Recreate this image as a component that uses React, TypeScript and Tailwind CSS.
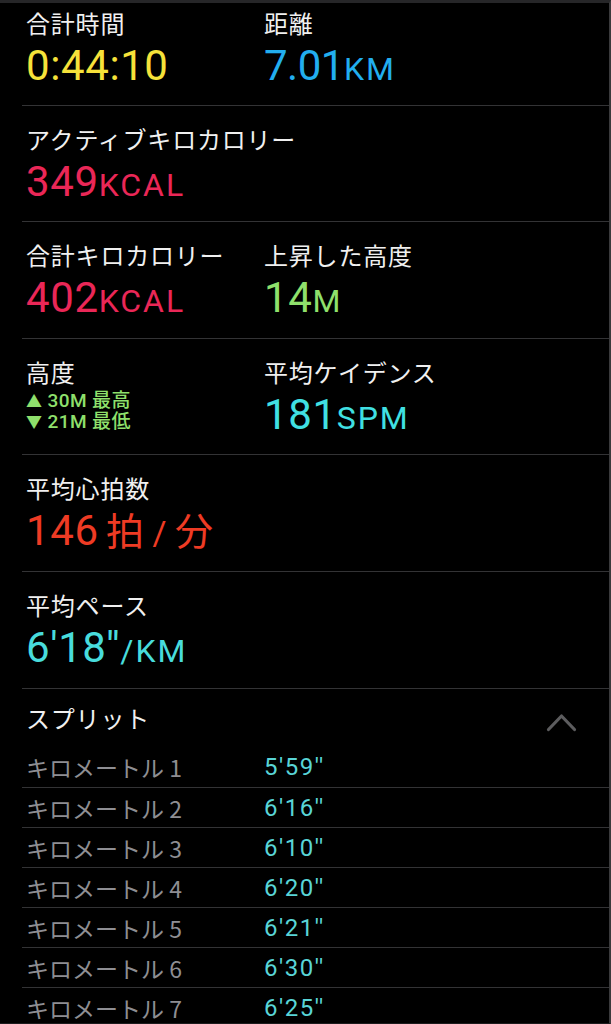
import React from "react";

const JP = "font-['Noto_Sans_CJK_JP',sans-serif]";
const NUM = "font-['Roboto','Noto_Sans_CJK_JP',sans-serif]";

function Label({ children }: { children: React.ReactNode }) {
  return (
    <div className={`${JP} text-[24px] leading-[30px] tracking-[0.8px] text-[#f0f0f0]`}>{children}</div>
  );
}

function Value({ color, children }: { color: string; children: React.ReactNode }) {
  return (
    <div className={`${NUM} mt-[6px] text-[42px] leading-[44px] tracking-[0.6px] whitespace-nowrap ${color}`}>
      {children}
    </div>
  );
}

function Unit({ children }: { children: React.ReactNode }) {
  return <span className="text-[32px] tracking-[2px]">{children}</span>;
}

function Chevron() {
  return (
    <svg width="31" height="19" viewBox="0 0 31 19" className="mt-2" fill="none">
      <polyline
        points="2.5,16.5 15.5,3 28.5,16.5"
        stroke="#5c5c5e"
        strokeWidth="3.2"
        strokeLinecap="round"
        strokeLinejoin="round"
      />
    </svg>
  );
}

const splits = [
  ["1", "5'59''"],
  ["2", "6'16''"],
  ["3", "6'10''"],
  ["4", "6'20''"],
  ["5", "6'21''"],
  ["6", "6'30''"],
  ["7", "6'25''"],
];

export default function App() {
  return (
    <div className="w-[611px] h-[1024px] overflow-hidden bg-black border-t-[3px] border-t-[#262628] border-r-2 border-r-[#3a3a3c] border-b border-b-[#1c1c1e]">
      {/* Section 1 */}
      <div className="ml-[22px] h-[102px] pl-[4px] pt-[5px] grid grid-cols-[238px_1fr]">
        <div>
          <Label>合計時間</Label>
          <Value color="text-[#f6e23a]">0:44:10</Value>
        </div>
        <div>
          <Label>距離</Label>
          <Value color="text-[#22aeef]">
            <span className="tracking-[-0.5px]">7.01</span>
            <Unit>KM</Unit>
          </Value>
        </div>
      </div>

      {/* Section 2 */}
      <div className="ml-[22px] h-[116px] border-t border-[#333335] pl-[4px] pt-[18px]">
        <Label>アクティブキロカロリー</Label>
        <Value color="text-[#ea2757]">
          349<Unit>KCAL</Unit>
        </Value>
      </div>

      {/* Section 3 */}
      <div className="ml-[22px] h-[117px] border-t border-[#333335] pl-[4px] pt-[18px] grid grid-cols-[238px_1fr]">
        <div>
          <Label>合計キロカロリー</Label>
          <Value color="text-[#ea2757]">
            402<Unit>KCAL</Unit>
          </Value>
        </div>
        <div>
          <Label>上昇した高度</Label>
          <Value color="text-[#8fe06c]">
            14<Unit>M</Unit>
          </Value>
        </div>
      </div>

      {/* Section 4 */}
      <div className="ml-[22px] h-[116px] border-t border-[#333335] pl-[4px] pt-[18px] grid grid-cols-[238px_1fr]">
        <div>
          <Label>高度</Label>
          <div className={`${NUM} mt-[4px] text-[19px] leading-[20px] tracking-[0.4px] font-medium text-[#8fe06c]`}>
            <div>
              <span className="text-[16px]">▲</span> 30M 最高
            </div>
            <div>
              <span className="text-[16px]">▼</span> 21M 最低
            </div>
          </div>
        </div>
        <div>
          <Label>平均ケイデンス</Label>
          <Value color="text-[#40e0e3]">
            181<Unit>SPM</Unit>
          </Value>
        </div>
      </div>

      {/* Section 5 */}
      <div className="ml-[22px] h-[117px] border-t border-[#333335] pl-[4px] pt-[18px]">
        <Label>平均心拍数</Label>
        <Value color="text-[#ee3b24]">
          146
          <span className="text-[38px] tracking-normal">
            <span className="text-[30px]"> </span>拍<span className="text-[34px]"> / </span>分
          </span>
        </Value>
      </div>

      {/* Section 6 */}
      <div className="ml-[22px] h-[117px] border-t border-[#333335] pl-[4px] pt-[18px]">
        <Label>平均ペース</Label>
        <Value color="text-[#48dcdc]">
          6'18''<Unit>/KM</Unit>
        </Value>
      </div>

      {/* Splits header */}
      <div className="ml-[22px] h-[59px] border-t border-[#333335] pl-[4px] pr-[32px] flex items-center justify-between">
        <div className={`${JP} text-[24px] leading-[30px] tracking-[0.8px] text-[#f0f0f0]`}>スプリット</div>
        <Chevron />
      </div>

      {/* Split rows */}
      {splits.map(([n, v], i) => (
        <div
          key={n}
          className={`ml-[22px] h-[40px] pl-[4px] flex items-center ${i > 0 ? "border-t border-[#333335]" : ""}`}
        >
          <div className={`${JP} w-[238px] text-[23px] leading-[28px] text-[#8e8e93]`}>
            キロメートル {n}
          </div>
          <div className={`${NUM} text-[24px] leading-[28px] tracking-[1.5px] text-[#59d5d7]`}>{v}</div>
        </div>
      ))}
    </div>
  );
}
